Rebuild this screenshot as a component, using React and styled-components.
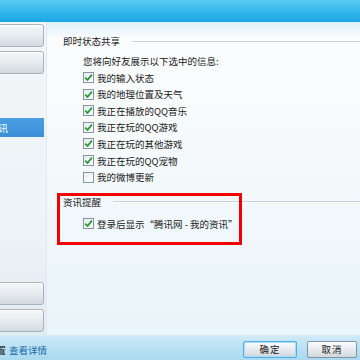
import React from 'react';
import styled, { createGlobalStyle } from 'styled-components';

const GlobalStyle = createGlobalStyle`
  html, body {
    margin: 0;
    padding: 0;
    background: #f7fafb;
  }
  body {
    font-family: "Noto Sans CJK SC", "Liberation Sans", sans-serif;
    font-size: 9.5px;
    color: #1a1a1a;
  }
`;

const Window = styled.div`
  width: 360px;
  height: 360px;
  display: flex;
  flex-direction: column;
  overflow: hidden;
`;

const TitleBar = styled.div`
  height: 22px;
  flex-shrink: 0;
  background: linear-gradient(to bottom, #5ccaf2 0%, #35b7ec 50%, #1ba6e4 100%);
`;

const Body = styled.div`
  flex: 1;
  display: flex;
  min-height: 0;
`;

const Sidebar = styled.div`
  width: 52px;
  margin-left: -6px;
  flex-shrink: 0;
  display: flex;
  flex-direction: column;
  background: linear-gradient(to bottom, #f2f6f9 0%, #eef3f7 60%, #e3ecf2 100%);
  border-right: 1px solid #e0e9ef;
`;

const NavButton = styled.div`
  width: 50px;
  height: 23px;
  margin-top: ${(p) => p.$top}px;
  box-sizing: border-box;
  border: 1px solid #a7b3bd;
  border-radius: 3px;
  background: linear-gradient(to bottom, #f6f8fa 0%, #e6ebef 50%, #d2d9df 100%);
  box-shadow: inset 0 1px 0 #ffffff;
`;

const NavSelected = styled.div`
  width: 50px;
  height: 19px;
  margin-top: ${(p) => p.$top}px;
  display: flex;
  align-items: center;
  justify-content: flex-end;
  padding-right: 36px;
  box-sizing: border-box;
  background: linear-gradient(to bottom, #4a9ee2 0%, #3a8fd8 100%);
  color: #ffffff;
  white-space: nowrap;
`;

const Spacer = styled.div`
  flex: 1;
`;

const Content = styled.div`
  flex: 1;
  position: relative;
  padding: 11px 0 0 16px;
  background: linear-gradient(to bottom, #dcf0fa 0px, #fafcfd 16px, #f8fbfc 90px, #f2f8fb 180px, #e9f5fa 100%);
`;

const GroupHeader = styled.div`
  display: flex;
  align-items: center;
  height: 16px;
  margin-top: ${(p) => p.$top || 0}px;
  white-space: nowrap;

  &::after {
    content: '';
    flex: 1;
    height: 1px;
    margin-left: 12px;
    background: #c5d4de;
    box-shadow: 0 1px 0 #ffffff;
  }
`;

const Line = styled.div`
  height: 16.6px;
  display: flex;
  align-items: center;
  padding-left: 20px;
  margin-top: ${(p) => p.$top || 0}px;
  white-space: nowrap;
`;

const Box = styled.span`
  width: 11px;
  height: 11px;
  box-sizing: border-box;
  margin-right: 3px;
  border: 1px solid #8396a5;
  background: linear-gradient(to bottom right, #e6ecf0, #ffffff);
  display: inline-flex;
  align-items: center;
  justify-content: center;
  flex-shrink: 0;
`;

const Highlight = styled.div`
  position: absolute;
  left: 10px;
  top: 171px;
  width: 185px;
  height: 52px;
  box-sizing: border-box;
  border: 3px solid #f50000;
  pointer-events: none;
`;

const BottomBar = styled.div`
  height: 25px;
  flex-shrink: 0;
  display: flex;
  align-items: center;
  background: linear-gradient(to bottom, #cfeaf7 0%, #b9e1f3 50%, #a9d9f0 100%);
  border-top: 1px solid #d7eef8;
  box-sizing: border-box;
`;

const Hint = styled.div`
  width: 47px;
  display: flex;
  justify-content: flex-end;
  white-space: nowrap;
  padding-top: 3px;
`;

const HintLink = styled.span`
  color: #1769a6;
  margin-left: 3px;
`;

const Buttons = styled.div`
  margin-left: auto;
  margin-right: 3px;
  display: flex;
  gap: 10px;
  padding-top: 2px;
`;

const DialogButton = styled.div`
  width: ${(p) => (p.$focus ? 54 : 50)}px;
  height: 17px;
  box-sizing: border-box;
  display: flex;
  align-items: center;
  justify-content: center;
  border: 1px solid ${(p) => (p.$focus ? '#4fb0e6' : '#8494a0')};
  border-radius: 2px;
  background: linear-gradient(to bottom, #fbfcfd 0%, #e7ebee 50%, #d0d8de 100%);
  box-shadow: ${(p) => (p.$focus ? 'inset 0 0 0 1px #a9dcf5' : 'inset 0 1px 0 #ffffff')};
  color: #1a1a1a;
  letter-spacing: 1px;
`;

const Check = ({ on }) => (
  <Box>
    {on && (
      <svg width="9" height="9" viewBox="0 0 9 9">
        <path d="M1.2 4.6 L3.5 7 L7.9 1.6" fill="none" stroke="#1f9a2a" strokeWidth="1.7" />
      </svg>
    )}
  </Box>
);

const shareItems = [
  { label: '我的输入状态', on: true },
  { label: '我的地理位置及天气', on: true },
  { label: '我正在播放的QQ音乐', on: true },
  { label: '我正在玩的QQ游戏', on: true },
  { label: '我正在玩的其他游戏', on: true },
  { label: '我正在玩的QQ宠物', on: true },
  { label: '我的微博更新', on: false },
];

export default function App() {
  return (
    <Window>
      <GlobalStyle />
      <TitleBar />
      <Body>
        <Sidebar>
          <NavButton $top={2} />
          <NavButton $top={4} />
          <NavSelected $top={44}>
            <span>资讯</span>
          </NavSelected>
          <Spacer />
          <NavButton $top={0} />
          <NavButton $top={4} />
          <Spacer style={{ flex: '0 0 3px' }} />
        </Sidebar>
        <Content>
          <GroupHeader>即时状态共享</GroupHeader>
          <Line $top={3.7}>您将向好友展示以下选中的信息:</Line>
          {shareItems.map((item) => (
            <Line key={item.label}>
              <Check on={item.on} />
              {item.label}
            </Line>
          ))}
          <GroupHeader $top={8.5}>资讯提醒</GroupHeader>
          <Line $top={5.7}>
            <Check on />
            登录后显示“腾讯网 - 我的资讯”
          </Line>
          <Highlight />
        </Content>
      </Body>
      <BottomBar>
        <Hint>
          <span>设置</span>
          <HintLink>查看详情</HintLink>
        </Hint>
        <Buttons>
          <DialogButton $focus>确定</DialogButton>
          <DialogButton>取消</DialogButton>
        </Buttons>
      </BottomBar>
    </Window>
  );
}
